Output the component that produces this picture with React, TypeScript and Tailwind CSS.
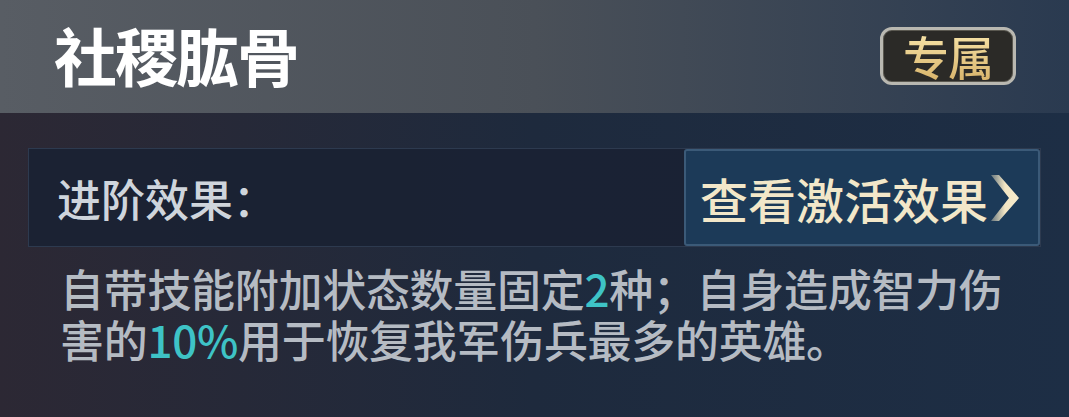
const cjk = { fontFamily: '"Noto Sans CJK SC", "Noto Sans", sans-serif' };

function Chevron() {
  return (
    <svg width="30" height="48" viewBox="0 0 30 48" className="ml-[2px]">
      <defs>
        <linearGradient id="chev" x1="0" y1="0" x2="1" y2="0">
          <stop offset="0" stopColor="#f3e6c4" stopOpacity="0.35" />
          <stop offset="0.5" stopColor="#f3e6c4" />
          <stop offset="1" stopColor="#f6ebcd" />
        </linearGradient>
      </defs>
      <polygon points="1,1 9,1 29,24 9,47 1,47 19,24" fill="url(#chev)" />
    </svg>
  );
}

function Badge() {
  return (
    <div className="flex h-[58px] w-[136px] items-center justify-center rounded-[12px] border-[3px] border-[#b9b8b1] bg-[#2b2a27] shadow-[inset_0_0_0_1px_#5a5850]">
      <span
        className="bg-gradient-to-b from-[#f7e4a8] to-[#d9b56c] bg-clip-text pb-[2px] text-[46px] font-medium leading-none tracking-[-1px] text-transparent"
        style={cjk}
      >
        专属
      </span>
    </div>
  );
}

export default function App() {
  return (
    <div
      className="flex h-[417px] w-[1069px] flex-col overflow-hidden bg-gradient-to-r from-[#2c2834] via-[#1e2a3d] to-[#1d2e45]"
      style={cjk}
    >
      <header className="flex h-[113px] shrink-0 items-center justify-between bg-gradient-to-r from-[#585d64] via-[#4a5058] to-[#2a3a50] pl-[54px] pr-[53px]">
        <h1 className="pb-[6px] text-[63px] font-bold leading-none tracking-[-2px] text-white">
          社稷肱骨
        </h1>
        <div className="pb-[2px]">
          <Badge />
        </div>
      </header>

      <div className="mx-[28px] mt-[35px] flex h-[99px] items-stretch justify-between border border-[#2d3a4f] bg-[#1a2133]/90 pl-[28px]">
        <span className="self-center text-[44px] font-medium leading-none text-[#cfd5dc]">
          进阶效果：
        </span>
        <button className="flex w-[356px] items-center justify-end rounded-[3px] border-2 border-[#3b5a78] bg-[#1c3a58] pr-[18px]">
          <span className="text-[48px] font-medium leading-none text-[#f2e7c9]">
            查看激活效果
          </span>
          <Chevron />
        </button>
      </div>

      <div className="mt-[16px] flex flex-col pl-[60px] text-[44px] font-medium tracking-[-0.3px] text-[#b5bbc3]">
        <div className="h-[51px] leading-[51px]">
          自带技能附加状态数量固定<span className="text-[#3ec3c6]">2</span>种；自身造成智力伤
        </div>
        <div className="h-[51px] leading-[51px]">
          害的<span className="text-[#3ec3c6]">10%</span>用于恢复我军伤兵最多的英雄。
        </div>
      </div>
    </div>
  );
}
